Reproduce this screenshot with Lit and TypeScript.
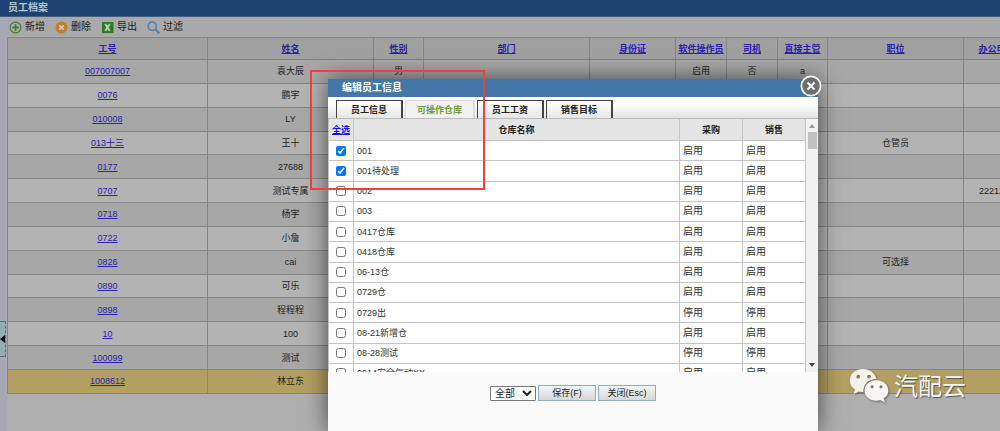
import { LitElement, html, css, svg } from "lit";
import { customElement, state } from "lit/decorators.js";
import { classMap } from "lit/directives/class-map.js";

interface Employee {
  id: string;
  name: string;
  gender?: string;
  operator?: string;
  driver?: string;
  manager?: string;
  position?: string;
  phone?: string;
  selected?: boolean;
}

interface Warehouse {
  name: string;
  buy: string;
  sell: string;
  checked?: boolean;
}

const HEADERS = ["工号", "姓名", "性别", "部门", "身份证", "软件操作员", "司机", "直接主管", "职位", "办公电话"];

const EMPLOYEES: Employee[] = [
  { id: "007007007", name: "袁大辰", gender: "男", operator: "启用", driver: "否", manager: "a" },
  { id: "0076", name: "鹏宇" },
  { id: "010008", name: "LY" },
  { id: "013十三", name: "王十", position: "仓管员" },
  { id: "0177", name: "27688" },
  { id: "0707", name: "测试专属", phone: "2221222" },
  { id: "0718", name: "杨宇" },
  { id: "0722", name: "小詹" },
  { id: "0826", name: "cai", position: "可选择" },
  { id: "0890", name: "可乐" },
  { id: "0898", name: "程程程" },
  { id: "10", name: "100" },
  { id: "100099", name: "测试" },
  { id: "1008612", name: "林立东", selected: true },
];

const ON = "启用";
const OFF = "停用";

const WAREHOUSES: Warehouse[] = [
  { name: "001", buy: ON, sell: ON, checked: true },
  { name: "001待处理", buy: ON, sell: ON, checked: true },
  { name: "002", buy: ON, sell: ON },
  { name: "003", buy: ON, sell: ON },
  { name: "0417仓库", buy: ON, sell: ON },
  { name: "0418仓库", buy: ON, sell: ON },
  { name: "06-13仓", buy: ON, sell: ON },
  { name: "0729仓", buy: ON, sell: ON },
  { name: "0729出", buy: OFF, sell: OFF },
  { name: "08-21新增仓", buy: ON, sell: ON },
  { name: "08-28测试", buy: OFF, sell: OFF },
  { name: "0914安全气动XX", buy: ON, sell: ON },
];

const TABS = ["员工信息", "可操作仓库", "员工工资", "销售目标"];

const icons = {
  add: svg`<circle cx="6.5" cy="6.5" r="5.4" fill="none" stroke="#3b7d2c" stroke-width="1.1"/><path d="M6.5 3.2v6.6M3.2 6.5h6.6" stroke="#3b7d2c" stroke-width="1.7"/>`,
  remove: svg`<circle cx="6.5" cy="6.5" r="6" fill="#c67d25"/><path d="M4.3 4.3l4.4 4.4M8.7 4.3l-4.4 4.4" stroke="#cfc4b4" stroke-width="1.9"/>`,
  excel: svg`<rect x="1" y="1" width="11.5" height="11" fill="#2d7a22"/><path d="M4.2 3l4.6 7M8.8 3l-4.6 7" stroke="#c3d2c0" stroke-width="1.7"/>`,
  filter: svg`<circle cx="5.2" cy="5.2" r="4.2" fill="none" stroke="#3f7fb2" stroke-width="1.3"/><path d="M8.3 8.3l4 4" stroke="#3f7fb2" stroke-width="1.9"/>`,
};

const BASE_FONT = css`
  "Liberation Sans", "Noto Sans CJK SC", sans-serif
`;

@customElement("warehouse-dialog")
class WarehouseDialog extends LitElement {
  static styles = css`
    :host {
      display: flex;
      flex-direction: column;
      background: #fafafa;
      box-shadow: 0 0 22px rgba(0, 0, 0, 0.6);
      font: 9px/12px ${BASE_FONT};
      color: #333;
    }
    .title {
      margin: 0;
      padding: 0 14px;
      height: 18px;
      font-size: 10px;
      line-height: 18px;
      background: #4476a8;
      color: #fff;
    }
    .tabs {
      display: flex;
      gap: 2px;
      padding: 3px 8px 0;
      height: 18px;
      border-bottom: 1px solid #bbb;
      background: linear-gradient(#fff, #fff 30%, #e2e2e2);
    }
    .tab {
      width: 67px;
      padding: 0;
      border: 1px solid #444;
      border-width: 1px 2px 0 1px;
      background: linear-gradient(#fff, #e6e6e6);
      font: bold 9px/16px ${BASE_FONT};
      color: #222;
    }
    .tab.active {
      width: 70px;
      border-color: #ddd;
      background: #f2f2f2;
      color: #6a9a3c;
    }
    .scroller {
      display: flex;
      height: 253px;
      overflow: hidden;
    }
    .list {
      flex: 1;
      height: 265px;
      border-collapse: collapse;
      table-layout: fixed;
      background: #fff;
    }
    .list th {
      height: 21px;
      padding: 0;
      border: 1px solid #c4c4c4;
      border-top: 0;
      background: #e4e4e4;
      color: #222;
    }
    .list td {
      padding: 0 3px;
      border: 1px solid #c4c4c4;
    }
    .list .name {
      font-size: 9px;
    }
    .list .status {
      font-size: 10px;
    }
    .list .pick {
      width: 24px;
      padding: 0;
      text-align: center;
    }
    .narrow {
      width: 62px;
    }
    .pick input {
      display: block;
      width: 10px;
      height: 10px;
      margin: 0 auto;
      accent-color: #0075ff;
    }
    .all {
      color: #11d;
    }
    .bar {
      display: flex;
      flex-direction: column;
      align-items: center;
      width: 12px;
      padding: 5px 0;
      box-sizing: border-box;
      background: #f1f1f1;
    }
    .thumb {
      width: 9px;
      height: 17px;
      margin: 4px 0 auto;
      background: #c1c1c1;
    }
    .arrow {
      width: 6px;
      height: 4px;
    }
    .footer {
      display: flex;
      justify-content: center;
      align-items: center;
      gap: 2px;
      padding: 13px 0;
    }
    .footer select {
      width: 46px;
      height: 15px;
      padding: 0;
      border: 1px solid #777;
      border-radius: 1px;
      background: #fff;
      font: 10px/12px ${BASE_FONT};
      color: #222;
    }
    .footer button {
      width: 58px;
      height: 16px;
      padding: 0;
      border: 1px solid #8fadca;
      background: linear-gradient(#f4f4f4, #d8d8d8);
      font: 9px/12px ${BASE_FONT};
      color: #222;
    }
    .close {
      position: absolute;
      top: -4px;
      right: -4px;
      width: 22px;
      height: 22px;
      padding: 0;
      border: 0;
      background: none;
    }
    .close svg {
      display: block;
    }
  `;

  @state() private active = 1;

  render() {
    return html`
      <h2 class="title">编辑员工信息</h2>
      <div class="tabs" role="tablist">
        ${TABS.map(
          (t, i) => html`<button
            role="tab"
            aria-selected=${i === this.active}
            class=${classMap({ tab: true, active: i === this.active })}
            @click=${() => (this.active = i)}
          >${t}</button>`
        )}
      </div>
      <div class="scroller">
        <table class="list">
          <thead>
            <tr>
              <th class="pick"><a class="all" href="#all">全选</a></th>
              <th>仓库名称</th>
              <th class="narrow">采购</th>
              <th class="narrow">销售</th>
            </tr>
          </thead>
          <tbody>
            ${WAREHOUSES.map(
              (w) => html`<tr>
                <td class="pick"><input type="checkbox" aria-label=${w.name} .checked=${!!w.checked} /></td>
                <td class="name">${w.name}</td>
                <td class="status">${w.buy}</td>
                <td class="status">${w.sell}</td>
              </tr>`
            )}
          </tbody>
        </table>
        <div class="bar" aria-hidden="true">
          <svg class="arrow" viewBox="0 0 6 4"><path d="M0 4L3 0l3 4z" fill="#999" /></svg>
          <span class="thumb"></span>
          <svg class="arrow" viewBox="0 0 6 4"><path d="M0 0h6L3 4z" fill="#444" /></svg>
        </div>
      </div>
      <div class="footer">
        <select aria-label="范围"><option>全部</option></select>
        <button>保存(F)</button>
        <button>关闭(Esc)</button>
      </div>
      <button class="close" aria-label="关闭">
        <svg width="22" height="22" viewBox="0 0 22 22">
          <circle cx="11" cy="11" r="9.6" fill="#6e6e6e" stroke="#f4f4f4" stroke-width="1.8" />
          <path d="M7.5 7.5l7 7M14.5 7.5l-7 7" stroke="#fff" stroke-width="1.9" />
        </svg>
      </button>
    `;
  }
}

@customElement("app-root")
class AppRoot extends LitElement {
  static styles = css`
    :host {
      display: flex;
      flex-direction: column;
      position: relative;
      height: 100vh;
      overflow: hidden;
      background: #afafaf;
      font: 9px/12px ${BASE_FONT};
      color: #222;
    }
    .header {
      margin: 0;
      padding: 0 8px;
      height: 16px;
      border-bottom: 1px solid #3d6088;
      background: #1d426f;
      color: #b9c2cd;
      font-size: 10px;
      line-height: 16px;
      font-weight: bold;
    }
    .body {
      display: flex;
      flex: 1;
      min-height: 0;
    }
    .rail {
      display: flex;
      flex: none;
      align-items: center;
      width: 7px;
      padding-top: 230px;
      box-sizing: border-box;
      background: #a7a7b6;
    }
    .handle {
      display: flex;
      align-items: center;
      width: 6px;
      height: 36px;
      padding: 0;
      box-sizing: border-box;
      border: 1px dashed #52727c;
      border-left: 0;
      background: #94adb2;
    }
    .main {
      flex: 1;
      min-width: 0;
      overflow: hidden;
    }
    .toolbar {
      display: flex;
      align-items: center;
      gap: 10px;
      height: 20px;
      padding: 0 2px;
      background: #a9a9a9;
    }
    .tool {
      display: flex;
      align-items: center;
      gap: 3px;
      padding: 0;
      border: 0;
      background: none;
      color: #1c1c1c;
      font: 10px/14px ${BASE_FONT};
    }
    .grid {
      width: calc(100% + 30px);
      height: 357px;
      border-collapse: collapse;
      table-layout: fixed;
    }
    .grid th,
    .grid td {
      padding: 0;
      border: 1px solid #858585;
      text-align: center;
      white-space: nowrap;
    }
    .grid th {
      height: 21px;
      background: #a0a0a0;
    }
    .grid tr {
      background: #b3b3b3;
    }
    .grid tbody tr:nth-child(odd) {
      background: #a7a7a7;
    }
    .grid tbody tr.selected {
      background: #b39f60;
    }
    .grid a {
      color: #2b22b0;
    }
    .c0 { width: 199px; }
    .c1 { width: 165px; }
    .c2 { width: 49px; }
    .c4 { width: 85px; }
    .c5, .c6 { width: 50px; }
    .c7 { width: 49px; }
    .c8 { width: 135px; }
    .c9 { width: 65px; }
    .dialog {
      position: absolute;
      top: 79px;
      bottom: 0;
      left: 32.8%;
      width: 49%;
    }
    .marker {
      position: absolute;
      top: 70px;
      left: 31%;
      width: 17.1%;
      height: 116px;
      border: 2px solid #f0403c;
      pointer-events: none;
    }
    .watermark {
      position: absolute;
      right: 34px;
      bottom: 28px;
      display: flex;
      align-items: center;
      gap: 5px;
      color: #f6f6f6;
      font: 24px/36px "Noto Sans CJK SC", sans-serif;
      text-shadow: 1px 1px 1px #555;
    }
    .watermark svg {
      filter: drop-shadow(1px 1px 1px #666);
    }
  `;

  private tool(icon: unknown, label: string) {
    return html`<button class="tool"><svg width="13" height="13" viewBox="0 0 13 13">${icon}</svg>${label}</button>`;
  }

  render() {
    return html`
      <h1 class="header">员工档案</h1>
      <div class="body">
        <div class="rail">
          <button class="handle" aria-label="收起">
            <svg width="5" height="8" viewBox="0 0 5 8"><path d="M5 0v8L0 4z" fill="#111" /></svg>
          </button>
        </div>
        <div class="main">
          <div class="toolbar">
            ${this.tool(icons.add, "新增")} ${this.tool(icons.remove, "删除")}
            ${this.tool(icons.excel, "导出")} ${this.tool(icons.filter, "过滤")}
          </div>
          <table class="grid">
            <thead>
              <tr>${HEADERS.map((h, i) => html`<th class="c${i}"><a href="#sort">${h}</a></th>`)}</tr>
            </thead>
            <tbody>
              ${EMPLOYEES.map(
                (e) => html`<tr class=${classMap({ selected: !!e.selected })}>
                  <td><a href="#employee">${e.id}</a></td>
                  <td>${e.name}</td>
                  <td>${e.gender}</td>
                  <td></td>
                  <td></td>
                  <td>${e.operator}</td>
                  <td>${e.driver}</td>
                  <td>${e.manager}</td>
                  <td>${e.position}</td>
                  <td>${e.phone}</td>
                </tr>`
              )}
            </tbody>
          </table>
        </div>
      </div>
      <warehouse-dialog class="dialog" role="dialog" aria-label="编辑员工信息"></warehouse-dialog>
      <div class="marker"></div>
      <div class="watermark">
        <svg width="40" height="35" viewBox="0 0 40 35">
          <path fill="#f5f2ea" fill-rule="evenodd" d="M14 1C6.500 1 .8 6 .8 12.500c0 3.800 2 7 5.200 9.100L4.600 26l5.300-2.600c1.500.4 3 .6 4.500.6-.3-8 5.600-13.300 13.100-13.100C26 5 20.600 1 14 1zM9.300 6.800a1.900 1.900 0 1 1 0 3.800 1.900 1.900 0 0 1 0-3.800zm10.800 0a1.900 1.900 0 1 1 0 3.800 1.900 1.900 0 0 1 0-3.800z" />
          <path fill="#f8f7f5" fill-rule="evenodd" d="M27.400 12.200c-6.700 0-11.800 4.500-11.800 10.200s5.100 10.300 11.800 10.300c1.400 0 2.700-.2 3.900-.6l4.600 2.500-1.300-4c2.900-1.900 4.700-4.800 4.700-8.200 0-5.700-5.200-10.200-11.900-10.200zm-4.200 5a1.600 1.600 0 1 1 0 3.200 1.600 1.600 0 0 1 0-3.200zm8.800 0a1.600 1.600 0 1 1 0 3.200 1.600 1.600 0 0 1 0-3.200z" />
        </svg>
        <span>汽配云</span>
      </div>
    `;
  }
}
